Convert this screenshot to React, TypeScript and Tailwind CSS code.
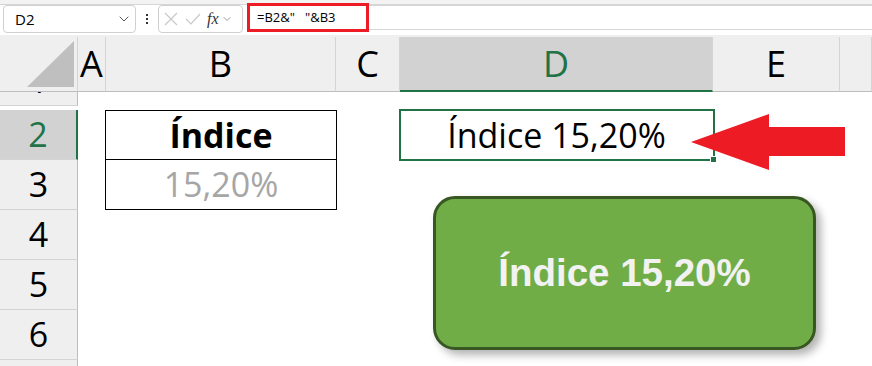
import { ChevronDown } from 'lucide-react';

const font = { fontFamily: '"Open Sans", "Noto Sans", sans-serif' };

const headers = [
  { label: 'A', active: false },
  { label: 'B', active: false },
  { label: 'C', active: false },
  { label: 'D', active: true },
  { label: 'E', active: false },
  { label: '', active: false },
];

const rows = [
  { n: '4', active: false },
  { n: '5', active: false },
  { n: '6', active: false },
];

function RowHead({ n, active }: { n: string; active?: boolean }) {
  return (
    <div
      className={
        active
          ? 'h-[50px] flex items-center justify-center bg-[#d2d2d2] border-b border-[#d4d4d4] border-r-2 border-r-[#217346] text-[#217346] text-[34px]'
          : 'h-[50px] flex items-center justify-center bg-[#efefef] border-b border-[#d4d4d4] border-r border-r-[#bdbdbd] text-black text-[34px]'
      }
    >
      {n}
    </div>
  );
}

export default function App() {
  return (
    <div className="w-[872px] h-[366px] overflow-hidden bg-white relative" style={font}>
      {/* formula bar */}
      <div className="h-[5px] bg-[#f3f3f3] border-b border-[#d6d6d6]" />
      <div className="h-[30px] flex items-start bg-white">
        <div className="ml-[3px] w-[133px] h-[28px] border border-[#d0d0d0] rounded-[4px] flex items-center justify-between pl-[11px] pr-[3px] text-[15px] text-black">
          <span>D2</span>
          <ChevronDown className="w-4 h-4 text-[#555]" strokeWidth={1.5} />
        </div>
        <div className="w-[22px] h-[28px] flex flex-col items-center justify-center gap-[2px]">
          <span className="w-[2px] h-[2px] bg-[#333]" />
          <span className="w-[2px] h-[2px] bg-[#333]" />
          <span className="w-[2px] h-[2px] bg-[#333]" />
        </div>
        <div className="w-[85px] h-[28px] border border-[#d0d0d0] rounded-[4px] flex items-center pl-[4px] gap-[6px]">
          <svg width="16" height="16" viewBox="0 0 16 16" className="text-[#c8c8c8]">
            <path d="M2 2 L14 14 M14 2 L2 14" stroke="currentColor" strokeWidth="1.2" fill="none" />
          </svg>
          <svg width="16" height="16" viewBox="0 0 16 16" className="text-[#c8c8c8]">
            <path d="M1 8 L6 13 L15 3" stroke="currentColor" strokeWidth="1.2" fill="none" />
          </svg>
          <span className="italic text-[16px] text-[#333] leading-none" style={{ fontFamily: '"Liberation Serif", serif' }}>fx</span>
          <ChevronDown className="w-3 h-3 -ml-[4px] text-[#777]" strokeWidth={1.5} />
        </div>
        <div className="ml-[5px] flex-1 h-[25px] border-y border-[#d6d6d6] relative">
          <div className="absolute -left-[1px] -top-[3px] w-[122px] h-[29px] border-[3px] border-[#ed1c24]" />
          <div className="pl-[9px] h-full flex items-center text-[13px] text-black whitespace-pre">
            =B2&amp;"   "&amp;B3
          </div>
        </div>
      </div>
      <div className="h-[2px] bg-[#efefef]" />

      {/* sheet */}
      <div className="relative">
        <div className="grid grid-cols-[78px_28px_230px_64px_313px_127px_1fr]">
          {/* header row */}
          <div className="h-[55px] bg-[#efefef] border-b border-[#bdbdbd] border-r border-r-[#d4d4d4] flex items-end justify-end pr-[3px] pb-[4px]">
            <svg width="47" height="46" viewBox="0 0 47 46">
              <polygon points="47,0 47,46 0,46" fill="#bfbfbf" />
            </svg>
          </div>
          {headers.map((h, i) => (
            <div
              key={i}
              className={
                h.active
                  ? 'h-[55px] bg-[#d2d2d2] border-b-2 border-[#217346] border-r border-r-[#d4d4d4] flex items-center justify-center text-[36px] text-[#217346]'
                  : 'h-[55px] bg-[#efefef] border-b border-[#bdbdbd] border-r border-r-[#d4d4d4] flex items-center justify-center text-[36px] text-black'
              }
            >
              {h.label}
            </div>
          ))}

          {/* row 1 (scrolled, bottom part only) */}
          <div className="h-[18px] overflow-hidden">
            <div className="-mt-[36px]">
              <RowHead n="1" />
            </div>
          </div>
          <div className="col-span-6 h-[18px]" />

          {/* row 2 */}
          <RowHead n="2" active />
          <div />
          <div className="h-[50px] border border-black -ml-[1px] mr-[-1px] flex items-center justify-center text-[34px] font-bold text-black">
            Índice
          </div>
          <div />
          <div className="h-[50px] flex items-center justify-center text-[34px] text-black">
            Índice 15,20%
          </div>
          <div className="col-span-2" />

          {/* row 3 */}
          <RowHead n="3" />
          <div />
          <div className="h-[50px] border-x border-b border-black -ml-[1px] mr-[-1px] flex items-center justify-center text-[34px] text-[#a6a6a6]">
            15,20%
          </div>
          <div className="col-span-4" />

          {rows.map((r) => (
            <div key={r.n} className="contents">
              <RowHead n={r.n} />
              <div className="col-span-6" />
            </div>
          ))}
          <div className="h-[6px] bg-[#efefef] border-r border-[#bdbdbd]" />
          <div className="col-span-6" />
        </div>

        {/* D2 selection */}
        <div className="absolute left-[399px] top-[72px] w-[316px] h-[52px] border-2 border-[#217346] pointer-events-none" />
        <div className="absolute left-[710px] top-[119px] w-[7px] h-[7px] bg-[#217346] border border-white" />

        {/* red arrow */}
        <svg className="absolute left-[688px] top-[74px]" width="160" height="62" viewBox="0 0 160 62">
          <polygon points="3,31 81,3 81,16 157,16 157,45 81,45 81,59" fill="#ed1c24" />
        </svg>

        {/* green shape */}
        <div
          className="absolute left-[433px] top-[159px] w-[383px] h-[154px] rounded-[22px] border-[3px] border-[#385723] bg-[#70ad47] shadow-[5px_5px_8px_rgba(0,0,0,0.3)] flex items-center justify-center text-[38.5px] font-bold text-[#f2f2f2]"
          style={{ fontFamily: '"Liberation Sans", Arial, sans-serif' }}
        >
          Índice 15,20%
        </div>
      </div>
    </div>
  );
}
